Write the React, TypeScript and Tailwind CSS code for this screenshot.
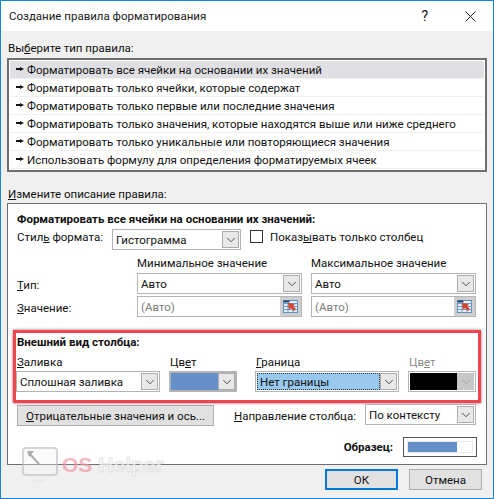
import { ChevronDown } from "lucide-react"

const rules = [
  "Форматировать все ячейки на основании их значений",
  "Форматировать только ячейки, которые содержат",
  "Форматировать только первые или последние значения",
  "Форматировать только значения, которые находятся выше или ниже среднего",
  "Форматировать только уникальные или повторяющиеся значения",
  "Использовать формулу для определения форматируемых ячеек",
]

function Arrow() {
  return (
    <svg width="9" height="7" viewBox="0 0 9 7" className="shrink-0">
      <path d="M0 2h4V1l4 2-4 2V4H0z" fill="#111" />
    </svg>
  )
}

function DropButton({ disabled, dark }: { disabled?: boolean; dark?: boolean }) {
  return (
    <div
      className={`flex w-[17px] shrink-0 items-center justify-center self-stretch border ${
        disabled ? "border-[#c4c4c4] bg-[#c8c8c8]" : "border-[#adadad] bg-[#e8e8e8]"
      } ${dark ? "bg-[#dcdcdc]" : ""}`}
    >
      <ChevronDown size={14} strokeWidth={1.6} color={disabled ? "#a0a0a0" : "#444"} />
    </div>
  )
}

function Combo({ text, width }: { text: string; width: string }) {
  return (
    <div className={`flex ${width} h-[21px] items-center border border-[#b4b4b4] bg-white p-px`}>
      <span className="flex-1 truncate pl-[2px] text-[#111]">{text}</span>
      <DropButton />
    </div>
  )
}

function RefEdit({ width }: { width: string }) {
  return (
    <div className={`flex ${width} h-[21px] items-center border border-[#b4b4b4] bg-white`}>
      <span className="flex-1 pl-[3px] text-[#7d7d7d]">(Авто)</span>
      <div className="flex h-full w-[21px] items-center justify-center bg-[#cfcfcf]">
        <svg width="15" height="13" viewBox="0 0 15 13">
          <rect x="0.5" y="0.5" width="14" height="12" fill="#e6f0fa" stroke="#5f8fc0" />
          <path d="M0 3.5h15M0 6.5h15M0 9.5h15M5 3v10M10 3v10" stroke="#6f9ccb" strokeWidth="1" />
          <rect x="0.5" y="0.5" width="6" height="2" fill="#24486f" />
          <path d="M5 3l7 1-2 2 3 3-2 2-3-3-2 2z" fill="#d8432b" />
        </svg>
      </div>
    </div>
  )
}

function Ul({ children }: { children: string }) {
  return <span className="underline underline-offset-1">{children}</span>
}

export default function App() {
  return (
    <div
      className="relative flex h-[499px] w-[494px] flex-col overflow-hidden border border-[#1a85d6] bg-[#f0f0f0] text-[11.5px] leading-[16px] text-[#111]"
      style={{ fontFamily: 'Roboto, "Noto Sans", sans-serif' }}
    >
      {/* Title bar */}
      <div className="flex h-[30px] shrink-0 items-center bg-white pl-[8px]">
        <span className="flex-1 text-[#1a1a1a]">Создание правила форматирования</span>
        <span className="mr-[37px] text-[14px]">?</span>
        <svg width="11" height="11" viewBox="0 0 11 11" className="mr-[17px]">
          <path d="M0.5 0.5l10 10M10.5 0.5l-10 10" stroke="#222" strokeWidth="1" fill="none" />
        </svg>
      </div>

      {/* Rule type */}
      <div className="flex flex-col px-[6px] pt-[9px]">
        <div className="h-[16px] pl-[1px]">
          Вы<Ul>б</Ul>ерите тип правила:
        </div>
        <div className="mt-[2px] flex h-[114px] w-[480px] flex-col border-2 border-[#6e6e6e] bg-white p-px">
          {rules.map((rule, i) => (
            <div
              key={rule}
              className={`flex h-[18px] shrink-0 items-center gap-[2px] border-b border-[#f0f0f0] pl-[6px] ${
                i === 0 ? "bg-[#e0e0e4]" : ""
              }`}
            >
              <Arrow />
              <span className="whitespace-nowrap">{rule}</span>
            </div>
          ))}
        </div>
      </div>

      {/* Rule description */}
      <div className="flex flex-col px-[6px] pt-[14px]">
        <div className="h-[16px] pl-[1px]">
          <Ul>И</Ul>змените описание правила:
        </div>
        <div className="mt-[1px] flex h-[262px] w-[480px] flex-col border border-[#6e6e6e] bg-white pl-[9px] pr-[9px] pt-[7px]">
          <div className="font-bold">Форматировать все ячейки на основании их значений:</div>
          <div className="mt-[2px] flex items-start">
            <span className="w-[95px]">
              Стил<Ul>ь</Ul> формата:
            </span>
            <Combo text="Гистограмма" width="w-[129px]" />
            <div className="ml-[9px] mt-[1px] h-[13px] w-[13px] border border-[#333] bg-white" />
            <span className="ml-[7px]">
              Показ<Ul>ы</Ul>вать только столбец
            </span>
          </div>
          <div className="mt-[5px] grid grid-cols-[120px_165px_9px_165px] grid-rows-[16px_21px_21px] gap-y-[2px]">
            <span />
            <span>Минимальное значение</span>
            <span />
            <span>Максимальное значение</span>
            <span className="self-center pt-[3px]">
              <Ul>Т</Ul>ип:
            </span>
            <Combo text="Авто" width="w-[165px]" />
            <span />
            <Combo text="Авто" width="w-[165px]" />
            <span className="self-center pt-[2px]">
              <Ul>З</Ul>начение:
            </span>
            <RefEdit width="w-[165px]" />
            <span />
            <RefEdit width="w-[165px]" />
          </div>

          {/* Highlighted group */}
          <div className="-ml-[4px] mt-[13px] flex h-[73px] w-[468px] flex-col border-[3px] border-[#f4434c] pl-[1px] pr-[1px] pt-[1px] shadow-[0_0_3px_#777]">
            <div className="h-[16px] font-bold">Внешний вид столбца:</div>
            <div className="mt-[4px] grid grid-cols-[153px_86px_153px_68px] grid-rows-[16px_21px] gap-y-[1px]">
              <span>
                <Ul>З</Ul>аливка
              </span>
              <span>
                Цв<Ul>е</Ul>т
              </span>
              <span>
                <Ul>Г</Ul>раница
              </span>
              <span className="text-[#8a8a8a]">
                Цв<Ul>е</Ul>т
              </span>
              <div className="-ml-[1px]">
                <Combo text="Сплошная заливка" width="w-[144px]" />
              </div>
              <div className="-ml-[1px] flex h-[21px] w-[68px] items-center border-2 border-[#b4b4b4] bg-white">
                <div className="h-full flex-1 bg-[#6590c7]" />
                <DropButton dark />
              </div>
              <div className="-ml-[1px] flex h-[21px] w-[144px] items-center border border-[#b4b4b4] bg-white p-px">
                <span className="flex h-full flex-1 items-center border border-dotted border-[#333] bg-[#99c9ee] pl-[2px]">
                  Нет границы
                </span>
                <DropButton />
              </div>
              <div className="-ml-[1px] flex h-[21px] w-[68px] items-center border border-[#b4b4b4] bg-white p-px">
                <div className="h-full flex-1 bg-black" />
                <DropButton disabled />
              </div>
            </div>
          </div>

          <div className="mt-[1px] flex items-start">
            <button className="mt-[1px] h-[21px] w-[197px] whitespace-nowrap border border-[#adadad] bg-[#e1e1e1] text-center">
              <Ul>О</Ul>трицательные значения и ось...
            </button>
            <span className="ml-[20px] mt-[4px] w-[131px] whitespace-nowrap">
              <Ul>Н</Ul>аправление столбца:
            </span>
            <Combo text="По контексту" width="w-[111px]" />
          </div>
          <div className="mt-[11px] flex items-center justify-end">
            <span className="mr-[10px] font-bold">Образец:</span>
            <div className="flex h-[20px] w-[74px] items-center border border-[#555] bg-white p-[3px]">
              <div className="flex h-full w-full border border-[#e8e8e8]">
                <div className="h-full w-[49px] bg-[#6590c7]" />
              </div>
            </div>
          </div>
        </div>
      </div>

      {/* Footer */}
      <div className="mt-[4px] flex justify-end gap-[11px] pr-[11px]">
        <button className="h-[21px] w-[73px] border-2 border-[#0078d7] bg-[#e1e1e1]">ОК</button>
        <button className="h-[21px] w-[73px] border border-[#adadad] bg-[#e1e1e1]">Отмена</button>
      </div>

      {/* Watermark */}
      <div className="pointer-events-none absolute left-[20px] top-[445px] flex items-center opacity-70">
        <svg width="38" height="42" viewBox="0 0 38 42">
          <rect x="2" y="2" width="34" height="27" rx="3" fill="#f5f5f5" fillOpacity="0.5" stroke="#c4c4c4" strokeWidth="2" />
          <path d="M8 7l10 11" stroke="#8a8a8a" strokeWidth="2" />
          <path d="M6 5h7l-5 6z" fill="#8a8a8a" />
          <rect x="13" y="33" width="11" height="3" fill="#e8e8e8" />
        </svg>
        <span
          className="ml-[3px] -mt-[6px] text-[21px] font-bold leading-none text-[#ef9aa8]"
          style={{ fontFamily: '"Liberation Sans", sans-serif' }}
        >
          OS
        </span>
        <span
          className="ml-[6px] -mt-[6px] text-[21px] font-bold leading-none text-[#f8f8f8] [-webkit-text-stroke:1px_#dcdcdc]"
          style={{ fontFamily: '"Liberation Sans", sans-serif' }}
        >
          Helper
        </span>
      </div>
    </div>
  )
}
